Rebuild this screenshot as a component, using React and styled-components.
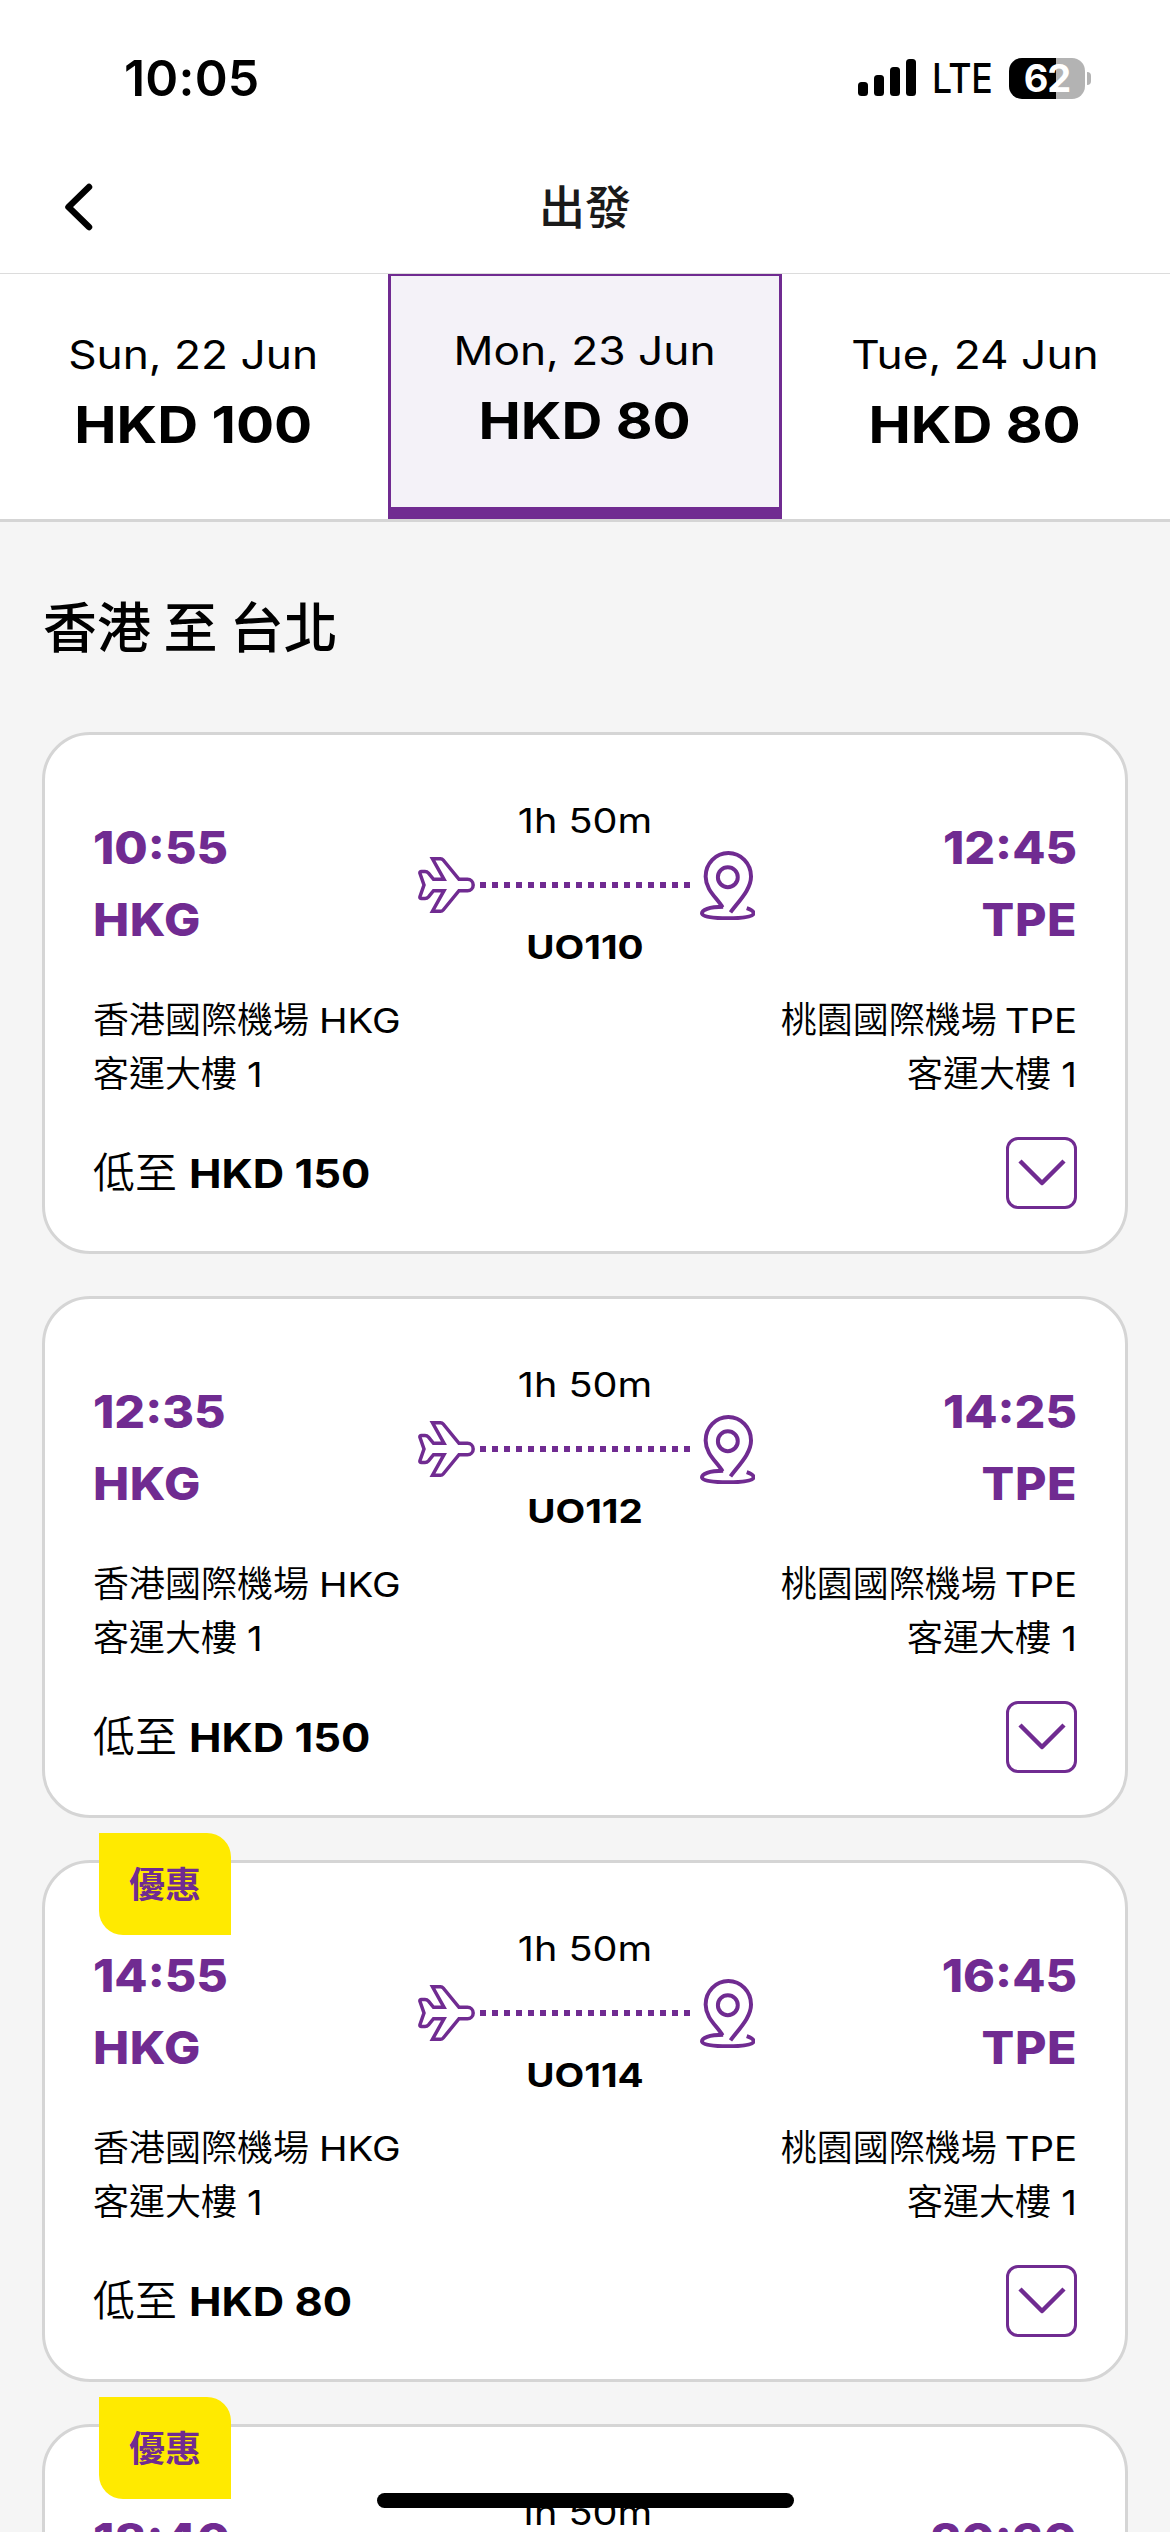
import React from "react";
import styled, { createGlobalStyle } from "styled-components";

const purple = "#702b91";
const line = "#d5d5d5";

const GlobalStyle = createGlobalStyle`
  *, *::before, *::after { box-sizing: border-box; }
  body {
    margin: 0;
    background: #f5f5f5;
    color: #000;
    font-family: Inter, "Noto Sans CJK TC", sans-serif;
  }
`;

const Screen = styled.div`
  width: 1170px;
  height: 2532px;
  overflow: hidden;
  display: flex;
  flex-direction: column;
  background: #f5f5f5;
`;

const StatusBar = styled.header`
  flex: none;
  height: 156px;
  padding: 0 79px 0 124px;
  display: flex;
  align-items: center;
  justify-content: space-between;
  background: #fff;
`;

const Clock = styled.span`
  font-size: 50px;
  font-weight: 600;
  letter-spacing: 0.2px;
`;

const StatusIcons = styled.div`
  display: flex;
  align-items: center;
`;

const SignalIcon = styled.svg`
  display: block;
  margin-right: 15px;
`;

const Network = styled.span`
  width: 59px;
  font-size: 41px;
  font-weight: 500;
  letter-spacing: -0.5px;
  margin-right: 18px;
  transform: scaleX(0.87);
  transform-origin: left center;
`;

const Battery = styled.div`
  width: 76px;
  height: 41px;
  border-radius: 13px;
  display: flex;
  align-items: center;
  justify-content: center;
  background: linear-gradient(to right, #000 47px, #b3b3b3 47px);
  color: #fff;
  font-size: 38px;
  font-weight: 700;
  letter-spacing: -1px;
`;

const BatteryCap = styled.div`
  width: 4px;
  height: 13px;
  margin-left: 2px;
  border-radius: 0 4px 4px 0;
  background: #b3b3b3;
`;

const NavBar = styled.nav`
  flex: none;
  height: 118px;
  padding: 0 60px 15px;
  display: grid;
  grid-template-columns: 1fr auto 1fr;
  align-items: center;
  background: #fff;
  border-bottom: 1px solid #dcdcdc;
`;

const BackIcon = styled.svg`
  display: block;
`;

const NavTitle = styled.h1`
  margin: 0;
  font-size: 46px;
  font-weight: 500;
  line-height: 60px;
  color: #1a1a1a;
`;

const Tabs = styled.div`
  flex: none;
  height: 248px;
  display: grid;
  grid-template-columns: 388px 394px 388px;
  background: #fff;
  border-bottom: 3px solid ${line};
`;

const Tab = styled.button`
  margin: 0;
  padding: ${(p) => (p.$active ? "40px 0 0" : "46px 2px 0 0")};
  border: solid ${purple};
  border-width: ${(p) => (p.$active ? "2px 3px 12px" : "0")};
  background: ${(p) => (p.$active ? "#f4f2f8" : "#fff")};
  display: flex;
  flex-direction: column;
  align-items: center;
  color: #000;
  font-family: inherit;
`;

const TabDate = styled.span`
  font-size: 39px;
  line-height: 70px;
  transform: scaleX(1.135);
`;

const TabPrice = styled.span`
  font-size: 51px;
  font-weight: 700;
  line-height: 70px;
  transform: scaleX(1.11);
`;

const Results = styled.main`
  padding: 67px 42px 0;
`;

const RouteTitle = styled.h2`
  margin: 0 0 63px;
  padding-left: 1px;
  font-size: 54px;
  font-weight: 500;
  line-height: 80px;
  word-spacing: -2px;
`;

const FlightList = styled.div`
  display: flex;
  flex-direction: column;
  gap: 42px;
`;

const Card = styled.article`
  position: relative;
  height: 522px;
  padding: 62px 48px 0;
  background: #fff;
  border: 3px solid ${line};
  border-radius: 48px;
`;

const Badge = styled.span`
  position: absolute;
  left: 54px;
  top: -30px;
  width: 132px;
  height: 102px;
  padding-bottom: 4px;
  border-radius: 0 24px 0 24px;
  display: flex;
  align-items: center;
  justify-content: center;
  background: #ffea00;
  color: ${purple};
  font-size: 36px;
  font-weight: 600;
`;

const Summary = styled.div`
  height: 175px;
  display: grid;
  grid-template-columns: 1fr 340px 1fr;
`;

const Stop = styled.div`
  padding-top: 15px;
  color: ${purple};
  font-size: 45px;
  font-weight: 800;
  line-height: 72px;
  text-align: ${(p) => (p.$end ? "right" : "left")};
  transform: scaleX(1.075);
  transform-origin: ${(p) => (p.$end ? "right" : "left")} center;
`;

const StopTime = styled.div``;

const StopCode = styled.div`
  letter-spacing: 0.5px;
`;

const Journey = styled.div`
  text-align: center;
`;

const Duration = styled.div`
  font-size: 34px;
  line-height: 48px;
  transform: scaleX(1.165);
`;

const Track = styled.div`
  height: 70px;
  margin: 5px 0 2px;
  display: flex;
  align-items: center;
  justify-content: flex-end;
`;

const Dots = styled.div`
  width: 210px;
  height: 6px;
  margin: 0 10px 0 5px;
  background: repeating-linear-gradient(to right, ${purple} 0 6px, transparent 6px 12px);
`;

const FlightNumber = styled.div`
  font-size: 33px;
  font-weight: 700;
  line-height: 50px;
  transform: scaleX(1.17);
`;

const Airports = styled.div`
  margin-top: 21px;
  display: flex;
  justify-content: space-between;
  font-size: 36px;
  font-weight: 350;
  line-height: 54px;
  white-space: nowrap;
`;

const Airport = styled.div`
  text-align: ${(p) => (p.$end ? "right" : "left")};
`;

const Latin = styled.span`
  display: inline-block;
  margin-left: ${(p) => p.$gap || 0}px;
  font-size: 34px;
  font-weight: 400;
  line-height: 1;
  transform: scaleX(1.13);
  transform-origin: ${(p) => (p.$gap ? "right" : "left")} center;
`;

const Footer = styled.div`
  margin-top: 36px;
  display: flex;
  align-items: center;
  justify-content: space-between;
`;

const Fare = styled.div`
  font-size: 42px;
  font-weight: 350;
  line-height: 72px;
  white-space: nowrap;
`;

const FareAmount = styled.strong`
  display: inline-block;
  font-size: 39px;
  font-weight: 700;
  line-height: 1;
  transform: scaleX(1.115);
  transform-origin: left center;
`;

const ExpandButton = styled.button`
  width: 71px;
  height: 72px;
  padding: 0;
  border: 3px solid ${purple};
  border-radius: 12px;
  background: #fff;
  display: flex;
  align-items: center;
  justify-content: center;
`;

const HomeIndicator = styled.div`
  position: fixed;
  left: 377px;
  top: 2493px;
  width: 417px;
  height: 15px;
  border-radius: 8px;
  background: #000;
`;

const Signal = () => (
  <SignalIcon width="59" height="38" viewBox="0 0 59 38">
    <rect x="0" y="23" width="10" height="14" rx="3.5" />
    <rect x="16" y="16" width="10" height="21" rx="3.5" />
    <rect x="32" y="8" width="10" height="29" rx="3.5" />
    <rect x="48" y="0" width="10" height="37" rx="3.5" />
  </SignalIcon>
);

const Plane = () => (
  <svg width="57" height="56" viewBox="0 0 57 56" fill="none" stroke={purple} strokeWidth="3.5">
    <path d="M14.5 1.75H22.5Q24.2 1.75 25.2 3L41 22.3H49.5A5.7 5.7 0 0 1 49.5 33.7H41L25.2 53Q24.2 54.250 22.5 54.250H14.5L26 33.7H15.5L10.5 39.8Q9 41.5 7 41.5H3.5Q1.4 41.5 2 39.5L6 28L2 16.5Q1.4 14.5 3.5 14.5H7Q9 14.5 10.5 16.2L15.5 22.3H26Z" />
  </svg>
);

const Pin = () => (
  <svg width="55" height="69" viewBox="0 0 166 208" fill="none" stroke={purple} strokeWidth="12" strokeLinejoin="round">
    <circle cx="84" cy="79" r="30" />
    <path d="M68 170C52 142 17 118 17 77A68.500 71 0 0 1 154 77C154 115 120 148 92 185" />
    <path d="M70 168C26 168 6 178 6 188C6 199 40 203 84 203C128 203 162 199 162 188C162 181 153 176 141 172" />
  </svg>
);

const flights = [
  { number: "UO110", depart: "10:55", arrive: "12:45", price: "HKD 150" },
  { number: "UO112", depart: "12:35", arrive: "14:25", price: "HKD 150" },
  { number: "UO114", depart: "14:55", arrive: "16:45", price: "HKD 80", deal: true },
  { number: "UO118", depart: "18:40", arrive: "20:30", price: "HKD 80", deal: true },
];

const days = [
  { date: "Sun, 22 Jun", price: "HKD 100" },
  { date: "Mon, 23 Jun", price: "HKD 80", active: true },
  { date: "Tue, 24 Jun", price: "HKD 80" },
];

const FlightCard = ({ flight }) => (
  <Card>
    {flight.deal && <Badge>優惠</Badge>}
    <Summary>
      <Stop>
        <StopTime>{flight.depart}</StopTime>
        <StopCode>HKG</StopCode>
      </Stop>
      <Journey>
        <Duration>1h 50m</Duration>
        <Track>
          <Plane />
          <Dots />
          <Pin />
        </Track>
        <FlightNumber>{flight.number}</FlightNumber>
      </Journey>
      <Stop $end>
        <StopTime>{flight.arrive}</StopTime>
        <StopCode>TPE</StopCode>
      </Stop>
    </Summary>
    <Airports>
      <Airport>
        香港國際機場 <Latin>HKG</Latin>
        <br />
        客運大樓 <Latin>1</Latin>
      </Airport>
      <Airport $end>
        桃園國際機場 <Latin $gap={6}>TPE</Latin>
        <br />
        客運大樓 <Latin $gap={2}>1</Latin>
      </Airport>
    </Airports>
    <Footer>
      <Fare>
        低至 <FareAmount>{flight.price}</FareAmount>
      </Fare>
      <ExpandButton aria-label="展開">
        <svg width="48" height="28" viewBox="0 0 48 28" fill="none" stroke={purple} strokeWidth="4.500" strokeLinejoin="round">
          <path d="M2 2L24 24L46 2" />
        </svg>
      </ExpandButton>
    </Footer>
  </Card>
);

export default function App() {
  return (
    <>
      <GlobalStyle />
      <Screen>
        <StatusBar>
          <Clock>10:05</Clock>
          <StatusIcons>
            <Signal />
            <Network>LTE</Network>
            <Battery>62</Battery>
            <BatteryCap />
          </StatusIcons>
        </StatusBar>
        <NavBar>
          <BackIcon width="36" height="54" viewBox="0 0 36 54" fill="none" stroke="#000" strokeWidth="6.500" strokeLinecap="round" strokeLinejoin="round">
            <path d="M29 7L8.500 27L29 47" />
          </BackIcon>
          <NavTitle>出發</NavTitle>
        </NavBar>
        <Tabs>
          {days.map((d) => (
            <Tab key={d.date} $active={d.active}>
              <TabDate>{d.date}</TabDate>
              <TabPrice>{d.price}</TabPrice>
            </Tab>
          ))}
        </Tabs>
        <Results>
          <RouteTitle>香港 至 台北</RouteTitle>
          <FlightList>
            {flights.map((f) => (
              <FlightCard key={f.number} flight={f} />
            ))}
          </FlightList>
        </Results>
      </Screen>
      <HomeIndicator />
    </>
  );
}
